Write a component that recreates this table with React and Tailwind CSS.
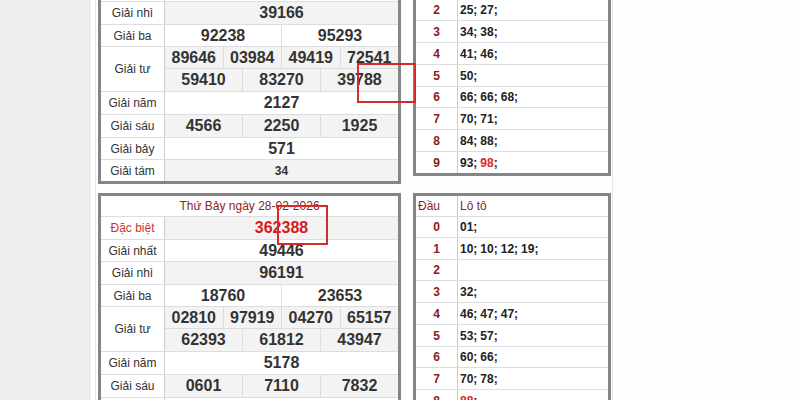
const days = [
  {
    date: 'Chủ Nhật ngày 01-03-2026',
    db: '725198',
    nhat: '31768',
    nhi: '39166',
    ba: ['92238', '95293'],
    tu1: ['89646', '03984', '49419', '72541'],
    tu2: ['59410', '83270', '39788'],
    nam: '2127',
    sau: ['4566', '2250', '1925'],
    bay: '571',
    tam: '34',
    loto: [[], ['10', '19'], ['25', '27'], ['34', '38'], ['41', '46'], ['50'], ['66', '66', '68'], ['70', '71'], ['84', '88'], ['93', '98*']],
  },
  {
    date: 'Thứ Bảy ngày 28-02-2026',
    db: '362388',
    nhat: '49446',
    nhi: '96191',
    ba: ['18760', '23653'],
    tu1: ['02810', '97919', '04270', '65157'],
    tu2: ['62393', '61812', '43947'],
    nam: '5178',
    sau: ['0601', '7110', '7832'],
    bay: '547',
    tam: '66',
    loto: [['01'], ['10', '10', '12', '19'], [], ['32'], ['46', '47', '47'], ['53', '57'], ['60', '66'], ['70', '78'], ['88*'], ['91', '93']],
  },
];

const lotoHeights = ['h-[21px]', 'h-[22px]', 'h-[21px]', 'h-[22px]', 'h-[22px]', 'h-[22px]', 'h-[21px]', 'h-[22px]', 'h-[22px]', 'h-[21px]'];

const num = 'text-[16px] font-bold text-[#333333] leading-none';

// one prize row: label on the left, numbers on the right
const Row = ({ label, h, gray, red, children }) => (
  <div className={`flex border-b border-[#dddddd] last:border-b-0 ${h}`}>
    <div className={`w-[64px] shrink-0 border-r border-[#cccccc] flex items-center justify-center text-[12px] ${red ? 'text-[#d0312d]' : 'text-[#333333]'}`}>
      {label}
    </div>
    <div className={`flex-1 flex flex-col ${gray ? 'bg-[#f3f3f3]' : 'bg-white'}`}>{children}</div>
  </div>
);

const Cells = ({ items, className = 'flex-1' }) => (
  <div className={`flex ${className}`}>
    {items.map((n, i) => (
      <div key={i} className={`flex-1 flex items-center justify-center ${num} ${i > 0 ? 'border-l border-[#dddddd]' : ''}`}>
        {n}
      </div>
    ))}
  </div>
);

const ResultTable = ({ d }) => (
  <div className="w-[303px] shrink-0 border-[3px] border-[#858585] bg-white mb-[9px]">
    <div className="h-[21px] border-b border-[#dddddd] flex items-center justify-center text-[12px] text-[#8b2323]">
      {d.date}
    </div>
    <Row label="Đặc biệt" h="h-[23px]" gray red>
      <div className="flex-1 flex items-center justify-center text-[16px] font-bold text-[#d7191c] leading-none">{d.db}</div>
    </Row>
    <Row label="Giải nhất" h="h-[22px]">
      <Cells items={[d.nhat]} />
    </Row>
    <Row label="Giải nhì" h="h-[23px]" gray>
      <Cells items={[d.nhi]} />
    </Row>
    <Row label="Giải ba" h="h-[22px]">
      <Cells items={d.ba} />
    </Row>
    <Row label="Giải tư" h="h-[45px]" gray>
      <Cells items={d.tu1} className="h-[22px] border-b border-[#dddddd]" />
      <Cells items={d.tu2} className="flex-1" />
    </Row>
    <Row label="Giải năm" h="h-[23px]">
      <Cells items={[d.nam]} />
    </Row>
    <Row label="Giải sáu" h="h-[23px]" gray>
      <Cells items={d.sau} />
    </Row>
    <Row label="Giải bảy" h="h-[22px]">
      <Cells items={[d.bay]} />
    </Row>
    <Row label="Giải tám" h="h-[21px]" gray>
      <div className="flex-1 flex items-center justify-center text-[12px] font-bold text-[#333333]">{d.tam}</div>
    </Row>
  </div>
);

const LotoTable = ({ d }) => (
  <div className="w-[198px] shrink-0 border-[3px] border-[#858585] bg-white">
    <div className="h-[21px] flex border-b border-[#dddddd] text-[12px] text-[#8b2323]">
      <div className="w-[42px] shrink-0 border-r border-[#cccccc] flex items-center pl-[2px]">Đầu</div>
      <div className="flex-1 flex items-center pl-[2px]">Lô tô</div>
    </div>
    {d.loto.map((list, i) => (
      <div key={i} className={`flex border-b border-[#dddddd] last:border-b-0 ${lotoHeights[i]}`}>
        <div className="w-[42px] shrink-0 border-r border-[#cccccc] flex items-center justify-center text-[12px] font-bold text-[#8b1a1a]">
          {i}
        </div>
        <div className="flex-1 flex items-center pl-[2px] text-[12px] font-bold text-[#222222] gap-[3px]">
          {list.map((n, j) => (
            <span key={j}>
              <span className={n.endsWith('*') ? 'text-[#e02424]' : ''}>{n.replace('*', '')}</span>;
            </span>
          ))}
        </div>
      </div>
    ))}
  </div>
);

export default function App() {
  return (
    <div className="relative w-[800px] h-[400px] overflow-hidden bg-[#fefefe] flex font-['Liberation_Sans',Arial,sans-serif]">
      <div className="w-[91px] shrink-0 bg-[#eeeeee]" />
      <div className="pl-[4px]">
        <div className="border-l border-r border-[#e6e6e6] pl-[2px] pr-[1px] -mt-[67px] flex flex-col">
          {days.map((d, i) => (
            <div key={i} className="flex items-start gap-[12px]">
              <ResultTable d={d} />
              <LotoTable d={d} />
            </div>
          ))}
        </div>
      </div>

      {/* red highlight boxes drawn over the tables */}
      <div className="absolute left-[357px] top-[63px] w-[59px] h-[40px] border-2 border-[#d42a2a]" />
      <div className="absolute left-[277px] top-[205px] w-[51px] h-[40px] border-2 border-[#d42a2a]" />
    </div>
  );
}
